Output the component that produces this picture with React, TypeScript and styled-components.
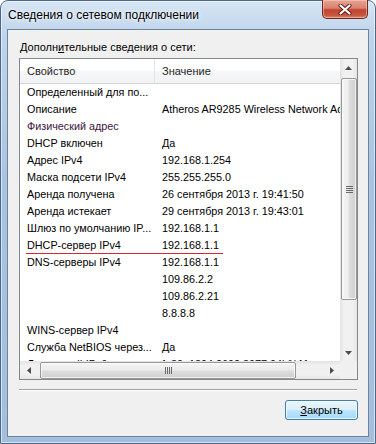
import React from "react";
import styled, { createGlobalStyle } from "styled-components";

const GlobalStyle = createGlobalStyle`
  body {
    margin: 0;
    background: #ffffff;
    font-family: "Liberation Sans", Arial, sans-serif;
  }
`;

const Window = styled.div`
  width: 376px;
  height: 444px;
  box-sizing: border-box;
  display: flex;
  flex-direction: column;
  padding: 0 6px 6px 6px;
  border: 1px solid #4d6786;
  border-radius: 8px 8px 0 0;
  background: linear-gradient(180deg, #d6e5f4 0%, #bed4ec 8%, #a9c4e1 40%, #a3bfdd 100%);
  box-shadow: inset 0 0 0 1px rgba(255, 255, 255, 0.55);
`;

const TitleBar = styled.div`
  height: 28px;
  display: flex;
  align-items: flex-start;
  justify-content: space-between;
`;

const Title = styled.div`
  padding: 6px 0 0 1px;
  font-size: 12px;
  line-height: 16px;
  color: #000;
  text-shadow: 0 0 6px rgba(255, 255, 255, 0.95), 0 0 3px rgba(255, 255, 255, 0.9);
`;

const CloseButton = styled.div`
  width: 46px;
  height: 19px;
  margin: -1px 1px 0 0;
  box-sizing: border-box;
  display: flex;
  align-items: center;
  justify-content: center;
  border: 1px solid #6e2a22;
  border-top: none;
  border-radius: 0 0 5px 5px;
  background: linear-gradient(180deg, #e8a493 0%, #d98170 45%, #c1442f 55%, #c9563f 85%, #dd8a6c 100%);
  box-shadow: inset 0 0 0 1px rgba(255, 220, 210, 0.45);
`;

const Client = styled.div`
  flex: 1;
  display: flex;
  flex-direction: column;
  padding: 10px 10px 0 11px;
  border: 1px solid #6f839a;
  background: #f0f0f0;
`;

const Label = styled.div`
  padding-left: 1px;
  font-size: 11px;
  line-height: 14px;
  color: #000;
  margin-bottom: 4px;
`;

const ListBox = styled.div`
  height: 322px;
  box-sizing: border-box;
  border: 1px solid #828790;
  background: #fff;
  display: grid;
  grid-template-columns: 1fr 17px;
  grid-template-rows: 1fr 18px;
`;

const ViewPort = styled.div`
  overflow: hidden;
  position: relative;
`;

const Header = styled.div`
  height: 24px;
  display: grid;
  grid-template-columns: 135px 1fr;
  border-bottom: 1px solid #d5d5d5;
  background: linear-gradient(180deg, #ffffff 0%, #ffffff 50%, #f6f7f8 51%, #f1f2f4 100%);
`;

const HeaderCell = styled.div<{ $sep?: boolean }>`
  padding-left: 7px;
  font-size: 11px;
  line-height: 24px;
  color: #1e1e1e;
  white-space: nowrap;
  border-right: ${(p) => (p.$sep ? "1px solid #e3e4e6" : "none")};
`;

const Row = styled.div<{ $marked?: boolean }>`
  position: relative;
  height: 17px;
  display: grid;
  grid-template-columns: 135px 1fr;
  ${(p) =>
    p.$marked &&
    `&::after {
      content: "";
      position: absolute;
      left: 6px;
      top: 16px;
      width: 197px;
      height: 1px;
      background: #d42a2a;
    }`}
`;

const Cell = styled.div<{ $tone?: string }>`
  padding-left: 7px;
  font-size: 10.8px;
  line-height: 17px;
  color: ${(p) => p.$tone || "#000"};
  white-space: nowrap;
  overflow: hidden;
`;

const VScroll = styled.div`
  display: flex;
  flex-direction: column;
  background: linear-gradient(90deg, #e3e3e3 0%, #f1f1f1 25%, #f1f1f1 75%, #e6e6e6 100%);
`;

const HScroll = styled.div`
  display: flex;
  align-items: stretch;
  background: linear-gradient(180deg, #e3e3e3 0%, #f1f1f1 25%, #f1f1f1 75%, #e6e6e6 100%);
`;

const Corner = styled.div`
  background: #f0f0f0;
`;

const ArrowBtn = styled.div<{ $len: number }>`
  flex: 0 0 ${(p) => p.$len}px;
  display: flex;
  align-items: center;
  justify-content: center;
`;

const Gap = styled.div<{ $len: number }>`
  flex: 0 0 ${(p) => p.$len}px;
`;

const Thumb = styled.div<{ $vertical?: boolean; $len: number }>`
  flex: 0 0 ${(p) => p.$len}px;
  box-sizing: border-box;
  margin: ${(p) => (p.$vertical ? "0 0 0 1px" : "1px 0 0 0")};
  display: flex;
  align-items: center;
  justify-content: center;
  border: 1px solid #979797;
  border-radius: 2px;
  background: ${(p) =>
    p.$vertical
      ? "linear-gradient(90deg, #f6f6f6 0%, #ececec 45%, #dcdcdc 55%, #d0d0d0 100%)"
      : "linear-gradient(180deg, #f6f6f6 0%, #ececec 45%, #dcdcdc 55%, #d0d0d0 100%)"};
  box-shadow: inset 0 0 0 1px rgba(255, 255, 255, 0.7);
`;

const Spacer = styled.div`
  flex: 1;
`;

const Separator = styled.div`
  margin-top: 9px;
  height: 1px;
  margin-right: 1px;
  background: #a0a0a0;
  border-bottom: 1px solid #ffffff;
`;

const Footer = styled.div`
  margin-top: 9px;
  display: flex;
  justify-content: flex-end;
`;

const Button = styled.div`
  width: 73px;
  height: 20px;
  box-sizing: border-box;
  display: flex;
  align-items: center;
  justify-content: center;
  border: 1px solid #3c7fb1;
  border-radius: 3px;
  background: linear-gradient(180deg, #eaf6fd 0%, #d9f0fc 50%, #bee6fd 51%, #a7d9f5 100%);
  box-shadow: inset 0 0 0 1px rgba(255, 255, 255, 0.75);
  font-size: 11px;
  color: #000;
`;

const Key = styled.span`
  text-decoration: underline;
`;

type Item = { name: string; value: string; tone?: string; marked?: boolean };

const items: Item[] = [
  { name: "Определенный для по...", value: "" },
  { name: "Описание", value: "Atheros AR9285 Wireless Network Adapter" },
  { name: "Физический адрес", value: "", tone: "#3e1240" },
  { name: "DHCP включен", value: "Да" },
  { name: "Адрес IPv4", value: "192.168.1.254" },
  { name: "Маска подсети IPv4", value: "255.255.255.0" },
  { name: "Аренда получена", value: "26 сентября 2013 г. 19:41:50" },
  { name: "Аренда истекает", value: "29 сентября 2013 г. 19:43:01" },
  { name: "Шлюз по умолчанию IP...", value: "192.168.1.1" },
  { name: "DHCP-сервер IPv4", value: "192.168.1.1", marked: true },
  { name: "DNS-серверы IPv4", value: "192.168.1.1" },
  { name: "", value: "109.86.2.2" },
  { name: "", value: "109.86.2.21" },
  { name: "", value: "8.8.8.8" },
  { name: "WINS-сервер IPv4", value: "" },
  { name: "Служба NetBIOS через...", value: "Да" },
  { name: "Локальный IPv6-адр...", value: "fe80::1894:2692:8977:94b%11" },
];

function Arrow({ dir }: { dir: "up" | "down" | "left" | "right" }) {
  const pts = {
    up: "0,4 7,4 3.5,0",
    down: "0,0 7,0 3.5,4",
    left: "4,0 4,7 0,3.5",
    right: "0,0 0,7 4,3.5",
  }[dir];
  const vert = dir === "up" || dir === "down";
  return (
    <svg width={vert ? 7 : 4} height={vert ? 4 : 7} viewBox={vert ? "0 0 7 4" : "0 0 4 7"}>
      <polygon points={pts} fill="#4d4d4d" />
    </svg>
  );
}

function Grip({ vertical }: { vertical?: boolean }) {
  const lines = [0, 2, 4, 6];
  return vertical ? (
    <svg width="7" height="7" viewBox="0 0 7 7">
      {lines.map((y) => (
        <rect key={y} x="0" y={y} width="7" height="1" fill="#6b6b6b" />
      ))}
    </svg>
  ) : (
    <svg width="7" height="7" viewBox="0 0 7 7">
      {lines.map((x) => (
        <rect key={x} x={x} y="0" width="1" height="7" fill="#6b6b6b" />
      ))}
    </svg>
  );
}

function CloseGlyph() {
  return (
    <svg width="14" height="11" viewBox="0 0 14 11">
      <path d="M2.5 1.5 L11.5 9.5 M11.5 1.5 L2.5 9.5" stroke="#5a1a12" strokeWidth="4" strokeLinecap="round" />
      <path d="M2.5 1.5 L11.5 9.5 M11.5 1.5 L2.5 9.5" stroke="#ffffff" strokeWidth="2.2" strokeLinecap="round" />
    </svg>
  );
}

export default function App() {
  return (
    <>
      <GlobalStyle />
      <Window>
        <TitleBar>
          <Title>Сведения о сетевом подключении</Title>
          <CloseButton>
            <CloseGlyph />
          </CloseButton>
        </TitleBar>
        <Client>
          <Label>
            Дополн<Key>и</Key>тельные сведения о сети:
          </Label>
          <ListBox>
            <ViewPort>
              <Header>
                <HeaderCell $sep>Свойство</HeaderCell>
                <HeaderCell>Значение</HeaderCell>
              </Header>
              {items.map((it, i) => (
                <Row key={i} $marked={it.marked}>
                  <Cell $tone={it.tone}>{it.name}</Cell>
                  <Cell>{it.value}</Cell>
                </Row>
              ))}
            </ViewPort>
            <VScroll>
              <ArrowBtn $len={17}>
                <Arrow dir="up" />
              </ArrowBtn>
              <Gap $len={2} />
              <Thumb $vertical $len={222}>
                <Grip vertical />
              </Thumb>
              <Spacer />
              <ArrowBtn $len={17}>
                <Arrow dir="down" />
              </ArrowBtn>
            </VScroll>
            <HScroll>
              <ArrowBtn $len={17}>
                <Arrow dir="left" />
              </ArrowBtn>
              <Gap $len={3} />
              <Thumb $len={256}>
                <Grip />
              </Thumb>
              <Spacer />
              <ArrowBtn $len={17}>
                <Arrow dir="right" />
              </ArrowBtn>
            </HScroll>
            <Corner />
          </ListBox>
          <Separator />
          <Footer>
            <Button>
              <span>
                <Key>З</Key>акрыть
              </span>
            </Button>
          </Footer>
        </Client>
      </Window>
    </>
  );
}
